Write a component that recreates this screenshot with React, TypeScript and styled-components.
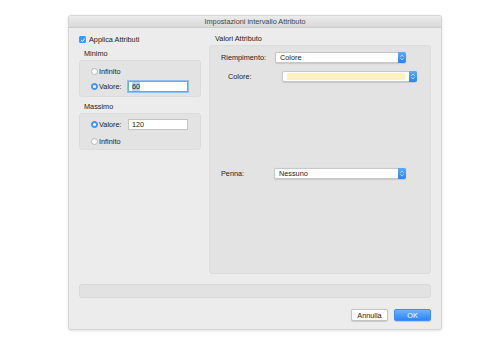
import React from "react";
import styled, { createGlobalStyle } from "styled-components";

const GlobalStyle = createGlobalStyle`
  html, body {
    margin: 0;
    padding: 0;
    background: #ffffff;
    font-family: "Liberation Sans", Arial, sans-serif;
    font-size: 7.3px;
    color: #222;
  }
`;

const Page = styled.div`
  width: 502px;
  height: 339px;
  padding: 15px 0 0 68px;
  box-sizing: border-box;
`;

const Window = styled.div`
  width: 374px;
  height: 315px;
  background: #ececec;
  border: 1px solid #d6d6d6;
  box-sizing: border-box;
  border-radius: 3px;
  box-shadow: 0 1px 3px rgba(0, 0, 0, 0.12);
  display: flex;
  flex-direction: column;
  overflow: hidden;
`;

const TitleBar = styled.div`
  height: 13px;
  background: linear-gradient(#ececec, #d8d8d8);
  border-bottom: 1px solid #cbcbcb;
  display: flex;
  align-items: center;
  justify-content: center;
  color: #444;
`;

const Content = styled.div`
  flex: 1;
  display: flex;
  flex-direction: column;
  padding: 7px 10px 8px 10px;
`;

const Columns = styled.div`
  display: flex;
  gap: 8px;
  height: 239px;
`;

const LeftColumn = styled.div`
  width: 122px;
  display: flex;
  flex-direction: column;
`;

const RightColumn = styled.div`
  width: 222px;
  display: flex;
  flex-direction: column;
`;

const CheckRow = styled.label`
  display: flex;
  align-items: center;
  gap: 3px;
  height: 9px;
`;

const CheckBox = styled.span`
  width: 7px;
  height: 7px;
  border-radius: 1.5px;
  background: #3b99fc;
  display: flex;
  align-items: center;
  justify-content: center;
`;

const GroupLabel = styled.div<{ $indent: number; $top: number }>`
  padding-left: ${(p) => p.$indent}px;
  margin-top: ${(p) => p.$top}px;
  height: 8px;
  line-height: 8px;
  margin-bottom: 2px;
`;

const GroupBox = styled.div<{ $gap: number }>`
  height: 37px;
  background: #e3e3e3;
  border: 1px solid #dcdcdc;
  border-radius: 3px;
  box-sizing: border-box;
  display: flex;
  flex-direction: column;
  gap: ${(p) => p.$gap}px;
  padding: 4px 0 0 11px;
`;

const RadioRow = styled.div`
  display: flex;
  align-items: center;
  height: 13px;
`;

const Radio = styled.span<{ $on?: boolean }>`
  width: 7px;
  height: 7px;
  border-radius: 50%;
  box-sizing: border-box;
  background: ${(p) => (p.$on ? "#3b99fc" : "#fff")};
  border: 1px solid ${(p) => (p.$on ? "#3b8ef0" : "#b8b8b8")};
  display: flex;
  align-items: center;
  justify-content: center;
  margin-right: 1px;

  &::after {
    content: "";
    width: 3px;
    height: 3px;
    border-radius: 50%;
    background: #fff;
    display: ${(p) => (p.$on ? "block" : "none")};
  }
`;

const RadioText = styled.span`
  width: 29px;
`;

const TextField = styled.div<{ $focus?: boolean }>`
  width: 60px;
  height: 11px;
  box-sizing: border-box;
  background: #fff;
  border: 1px solid ${(p) => (p.$focus ? "#6aa8f2" : "#c4c4c4")};
  box-shadow: ${(p) => (p.$focus ? "0 0 0 1px #8fbef5" : "none")};
  display: flex;
  align-items: center;
  padding-left: 3px;
`;

const Selected = styled.span`
  background: #b3d4fc;
`;

const Panel = styled.div`
  flex: 1;
  background: #e3e3e3;
  border: 1px solid #dcdcdc;
  border-radius: 3px;
  display: flex;
  flex-direction: column;
  padding: 6px 0 0 11px;
`;

const FieldRow = styled.div<{ $top: number }>`
  display: flex;
  align-items: center;
  margin-top: ${(p) => p.$top}px;
`;

const FieldLabel = styled.span<{ $w: number; $indent?: number }>`
  width: ${(p) => p.$w}px;
  padding-left: ${(p) => p.$indent || 0}px;
  box-sizing: border-box;
`;

const Select = styled.div<{ $w: number }>`
  width: ${(p) => p.$w}px;
  height: 11px;
  box-sizing: border-box;
  background: #fff;
  border: 1px solid #c8c8c8;
  border-radius: 2px;
  display: flex;
  align-items: center;
  box-shadow: 0 0.5px 1px rgba(0, 0, 0, 0.12);
`;

const SelectValue = styled.span`
  flex: 1;
  padding-left: 4px;
`;

const Swatch = styled.span`
  flex: 1;
  height: 7px;
  margin: 0 4px;
  background: #fdf1bf;
`;

const Stepper = styled.span`
  width: 8px;
  height: 11px;
  margin: -1px -1px -1px 0;
  background: linear-gradient(#5eaaf9, #2b84f6);
  border-radius: 0 2px 2px 0;
  display: flex;
  align-items: center;
  justify-content: center;
`;

const StatusBar = styled.div`
  height: 14px;
  margin-top: 10px;
  background: #e2e2e2;
  border: 1px solid #dadada;
  border-radius: 3px;
  box-sizing: border-box;
`;

const Buttons = styled.div`
  display: flex;
  justify-content: flex-end;
  gap: 6px;
  margin-top: 11px;
`;

const Button = styled.button<{ $primary?: boolean }>`
  width: 37px;
  height: 12px;
  padding: 0;
  font: inherit;
  border-radius: 2px;
  box-sizing: border-box;
  border: 1px solid ${(p) => (p.$primary ? "#3d8ff2" : "#c4c4c4")};
  background: ${(p) => (p.$primary ? "linear-gradient(#6cb3fa, #2b86f7)" : "#fff")};
  color: ${(p) => (p.$primary ? "#fff" : "#222")};
  box-shadow: 0 0.5px 1px rgba(0, 0, 0, 0.15);
`;

const Check = () => (
  <svg width="6" height="6" viewBox="0 0 6 6">
    <path d="M1.2 3.1 L2.5 4.4 L4.9 1.5" fill="none" stroke="#fff" strokeWidth="1" />
  </svg>
);

const Arrows = () => (
  <svg width="4" height="7" viewBox="0 0 4 7">
    <path d="M0.6 2.6 L2 1.2 L3.4 2.6 M0.6 4.4 L2 5.8 L3.4 4.4" fill="none" stroke="#fff" strokeWidth="0.8" />
  </svg>
);

const App = (): JSX.Element => {
  return (
    <Page>
      <GlobalStyle />
      <Window>
        <TitleBar>Impostazioni intervallo Attributo</TitleBar>
        <Content>
          <Columns>
            <LeftColumn>
              <CheckRow>
                <CheckBox>
                  <Check />
                </CheckBox>
                Applica Attributi
              </CheckRow>
              <GroupLabel $indent={5} $top={6}>Minimo</GroupLabel>
              <GroupBox $gap={2}>
                <RadioRow>
                  <Radio />
                  <RadioText>Infinito</RadioText>
                </RadioRow>
                <RadioRow>
                  <Radio $on />
                  <RadioText>Valore:</RadioText>
                  <TextField $focus>
                    <Selected>60</Selected>
                  </TextField>
                </RadioRow>
              </GroupBox>
              <GroupLabel $indent={5} $top={6}>Massimo</GroupLabel>
              <GroupBox $gap={4}>
                <RadioRow>
                  <Radio $on />
                  <RadioText>Valore:</RadioText>
                  <TextField>120</TextField>
                </RadioRow>
                <RadioRow>
                  <Radio />
                  <RadioText>Infinito</RadioText>
                </RadioRow>
              </GroupBox>
            </LeftColumn>
            <RightColumn>
              <GroupLabel $indent={6} $top={0}>Valori Attributo</GroupLabel>
              <Panel>
                <FieldRow $top={0}>
                  <FieldLabel $w={54}>Riempimento:</FieldLabel>
                  <Select $w={131}>
                    <SelectValue>Colore</SelectValue>
                    <Stepper>
                      <Arrows />
                    </Stepper>
                  </Select>
                </FieldRow>
                <FieldRow $top={8}>
                  <FieldLabel $w={61} $indent={7}>Colore:</FieldLabel>
                  <Select $w={135}>
                    <Swatch />
                    <Stepper>
                      <Arrows />
                    </Stepper>
                  </Select>
                </FieldRow>
                <FieldRow $top={86}>
                  <FieldLabel $w={53}>Penna:</FieldLabel>
                  <Select $w={132}>
                    <SelectValue>Nessuno</SelectValue>
                    <Stepper>
                      <Arrows />
                    </Stepper>
                  </Select>
                </FieldRow>
              </Panel>
            </RightColumn>
          </Columns>
          <StatusBar />
          <Buttons>
            <Button>Annulla</Button>
            <Button $primary>OK</Button>
          </Buttons>
        </Content>
      </Window>
    </Page>
  );
};

export default App;
